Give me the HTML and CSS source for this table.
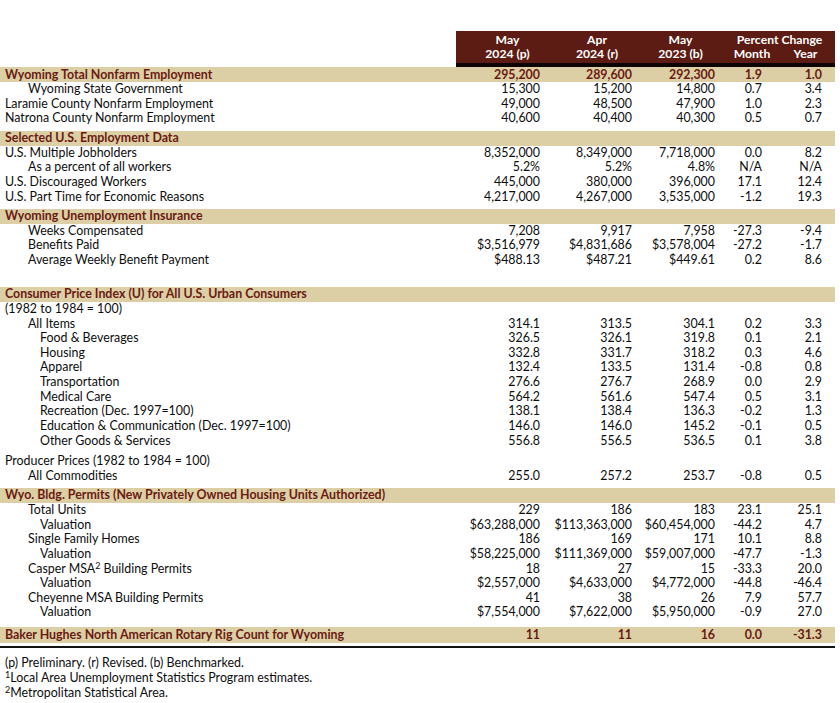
FILE: index.html
```html
<!DOCTYPE html>
<html>
<head>
<meta charset="utf-8">
<link rel="stylesheet" href="styles.css">
</head>
<body>
<div class="page">
  <div class="head">
    <div class="hc c1"><div>May</div><div>2024 (p)</div></div>
    <div class="hc c2"><div>Apr</div><div>2024 (r)</div></div>
    <div class="hc c3"><div>May</div><div>2023 (b)</div></div>
    <div class="hc pc">
      <div class="pct">Percent Change</div>
      <div class="pcs"><span class="hm">Month</span><span class="hy">Year</span></div>
    </div>
  </div>

  <div class="row band first"><span>Wyoming Total Nonfarm Employment</span><span class="n">295,200</span><span class="n">289,600</span><span class="n">292,300</span><span class="n m">1.9</span><span class="n y">1.0</span></div>
  <div class="row"><span class="i1">Wyoming State Government</span><span class="n">15,300</span><span class="n">15,200</span><span class="n">14,800</span><span class="n m">0.7</span><span class="n y">3.4</span></div>
  <div class="row"><span>Laramie County Nonfarm Employment</span><span class="n">49,000</span><span class="n">48,500</span><span class="n">47,900</span><span class="n m">1.0</span><span class="n y">2.3</span></div>
  <div class="row"><span>Natrona County Nonfarm Employment</span><span class="n">40,600</span><span class="n">40,400</span><span class="n">40,300</span><span class="n m">0.5</span><span class="n y">0.7</span></div>

  <div class="row band"><span>Selected U.S. Employment Data</span></div>
  <div class="row"><span>U.S. Multiple Jobholders</span><span class="n">8,352,000</span><span class="n">8,349,000</span><span class="n">7,718,000</span><span class="n m">0.0</span><span class="n y">8.2</span></div>
  <div class="row"><span class="i1">As a percent of all workers</span><span class="n">5.2%</span><span class="n">5.2%</span><span class="n">4.8%</span><span class="n m">N/A</span><span class="n y">N/A</span></div>
  <div class="row"><span>U.S. Discouraged Workers</span><span class="n">445,000</span><span class="n">380,000</span><span class="n">396,000</span><span class="n m">17.1</span><span class="n y">12.4</span></div>
  <div class="row"><span>U.S. Part Time for Economic Reasons</span><span class="n">4,217,000</span><span class="n">4,267,000</span><span class="n">3,535,000</span><span class="n m">-1.2</span><span class="n y">19.3</span></div>

  <div class="row band"><span>Wyoming Unemployment Insurance</span></div>
  <div class="row"><span class="i1">Weeks Compensated</span><span class="n">7,208</span><span class="n">9,917</span><span class="n">7,958</span><span class="n m">-27.3</span><span class="n y">-9.4</span></div>
  <div class="row"><span class="i1">Benefits Paid</span><span class="n">$3,516,979</span><span class="n">$4,831,686</span><span class="n">$3,578,004</span><span class="n m">-27.2</span><span class="n y">-1.7</span></div>
  <div class="row"><span class="i1">Average Weekly Benefit Payment</span><span class="n">$488.13</span><span class="n">$487.21</span><span class="n">$449.61</span><span class="n m">0.2</span><span class="n y">8.6</span></div>
  <div class="row blank"></div>

  <div class="row band"><span>Consumer Price Index (U) for All U.S. Urban Consumers</span></div>
  <div class="row"><span>(1982 to 1984 = 100)</span></div>
  <div class="row"><span class="i1">All Items</span><span class="n">314.1</span><span class="n">313.5</span><span class="n">304.1</span><span class="n m">0.2</span><span class="n y">3.3</span></div>
  <div class="row"><span class="i2">Food &amp; Beverages</span><span class="n">326.5</span><span class="n">326.1</span><span class="n">319.8</span><span class="n m">0.1</span><span class="n y">2.1</span></div>
  <div class="row"><span class="i2">Housing</span><span class="n">332.8</span><span class="n">331.7</span><span class="n">318.2</span><span class="n m">0.3</span><span class="n y">4.6</span></div>
  <div class="row"><span class="i2">Apparel</span><span class="n">132.4</span><span class="n">133.5</span><span class="n">131.4</span><span class="n m">-0.8</span><span class="n y">0.8</span></div>
  <div class="row"><span class="i2">Transportation</span><span class="n">276.6</span><span class="n">276.7</span><span class="n">268.9</span><span class="n m">0.0</span><span class="n y">2.9</span></div>
  <div class="row"><span class="i2">Medical Care</span><span class="n">564.2</span><span class="n">561.6</span><span class="n">547.4</span><span class="n m">0.5</span><span class="n y">3.1</span></div>
  <div class="row"><span class="i2">Recreation (Dec. 1997=100)</span><span class="n">138.1</span><span class="n">138.4</span><span class="n">136.3</span><span class="n m">-0.2</span><span class="n y">1.3</span></div>
  <div class="row"><span class="i2">Education &amp; Communication (Dec. 1997=100)</span><span class="n">146.0</span><span class="n">146.0</span><span class="n">145.2</span><span class="n m">-0.1</span><span class="n y">0.5</span></div>
  <div class="row"><span class="i2">Other Goods &amp; Services</span><span class="n">556.8</span><span class="n">556.5</span><span class="n">536.5</span><span class="n m">0.1</span><span class="n y">3.8</span></div>
  <div class="row gap"><span>Producer Prices (1982 to 1984 = 100)</span></div>
  <div class="row"><span class="i1">All Commodities</span><span class="n">255.0</span><span class="n">257.2</span><span class="n">253.7</span><span class="n m">-0.8</span><span class="n y">0.5</span></div>

  <div class="row band"><span>Wyo. Bldg. Permits (New Privately Owned Housing Units Authorized)</span></div>
  <div class="row"><span class="i1">Total Units</span><span class="n">229</span><span class="n">186</span><span class="n">183</span><span class="n m">23.1</span><span class="n y">25.1</span></div>
  <div class="row"><span class="i2">Valuation</span><span class="n">$63,288,000</span><span class="n">$113,363,000</span><span class="n">$60,454,000</span><span class="n m">-44.2</span><span class="n y">4.7</span></div>
  <div class="row"><span class="i1">Single Family Homes</span><span class="n">186</span><span class="n">169</span><span class="n">171</span><span class="n m">10.1</span><span class="n y">8.8</span></div>
  <div class="row"><span class="i2">Valuation</span><span class="n">$58,225,000</span><span class="n">$111,369,000</span><span class="n">$59,007,000</span><span class="n m">-47.7</span><span class="n y">-1.3</span></div>
  <div class="row"><span class="i1">Casper MSA<sup>2</sup> Building Permits</span><span class="n">18</span><span class="n">27</span><span class="n">15</span><span class="n m">-33.3</span><span class="n y">20.0</span></div>
  <div class="row"><span class="i2">Valuation</span><span class="n">$2,557,000</span><span class="n">$4,633,000</span><span class="n">$4,772,000</span><span class="n m">-44.8</span><span class="n y">-46.4</span></div>
  <div class="row"><span class="i1">Cheyenne MSA Building Permits</span><span class="n">41</span><span class="n">38</span><span class="n">26</span><span class="n m">7.9</span><span class="n y">57.7</span></div>
  <div class="row"><span class="i2">Valuation</span><span class="n">$7,554,000</span><span class="n">$7,622,000</span><span class="n">$5,950,000</span><span class="n m">-0.9</span><span class="n y">27.0</span></div>

  <div class="row band last"><span>Baker Hughes North American Rotary Rig Count for Wyoming</span><span class="n">11</span><span class="n">11</span><span class="n">16</span><span class="n m">0.0</span><span class="n y">-31.3</span></div>

  <div class="notes">
    <div>(p) Preliminary. (r) Revised. (b) Benchmarked.</div>
    <div><sup>1</sup>Local Area Unemployment Statistics Program estimates.</div>
    <div><sup>2</sup>Metropolitan Statistical Area.</div>
  </div>
</div>
</body>
</html>
```
FILE: styles.css
```css
* { box-sizing: border-box; }
html, body { margin: 0; padding: 0; background: #fff; }
body {
  font-family: Lato, "Open Sans", sans-serif;
  font-size: 12.4px;
  color: #0d0d0d;
}
.page {
  width: 835px;
  padding-top: 31px;
}
.head {
  display: grid;
  grid-template-columns: 89px 92px 83px 115px;
  margin-left: 456px;
  width: 379px;
  background: #5c1c13;
  color: #fff;
  font-weight: bold;
  font-size: 12.2px;
  line-height: 14.6px;
  padding: 1.5px 0 1.5px;
  border-bottom: 4px solid #0d0504;
}
.hc { text-align: center; }
.c1 { padding-left: 14px; }
.c2 { padding-left: 12px; }
.c3 { padding-left: 4px; }
.pc { display: flex; flex-direction: column; }
.pct { padding-left: 4px; text-align: center; }
.pcs { display: flex; }
.hm { width: 52px; padding-left: 12px; text-align: center; }
.hy { width: 63px; padding-left: 4px; text-align: center; }

.row {
  display: grid;
  grid-template-columns: 456px 89px 92px 83px 52px 63px;
  line-height: 14.63px;
  height: 14.63px;
  white-space: nowrap;
}
.row > span:first-child { padding-left: 5px; }
.row > span.i1 { padding-left: 28px; }
.row > span.i2 { padding-left: 40px; }
.n { text-align: right; padding-right: 5px; }
.n.m { padding-right: 10px; }
.n.y { padding-right: 13px; }
.band {
  background: #dccfa5;
  color: #6a1a12;
  font-weight: bold;
  margin-top: 5px;
}
.band.first { margin-top: 0; height: 15px; line-height: 15px; }
.band.last { margin-top: 7px; height: 16px; line-height: 16px; }
.gap { margin-top: 6px; }
.blank { height: 14.63px; }
sup { font-size: 9px; line-height: 0; vertical-align: 4px; }
.notes {
  margin-top: 3px;
  border-top: 2px solid #111;
  box-shadow: 0 1px 0 #999;
  padding-top: 7px;
  line-height: 15px;
}
.notes > div { padding-left: 5px; }
```
